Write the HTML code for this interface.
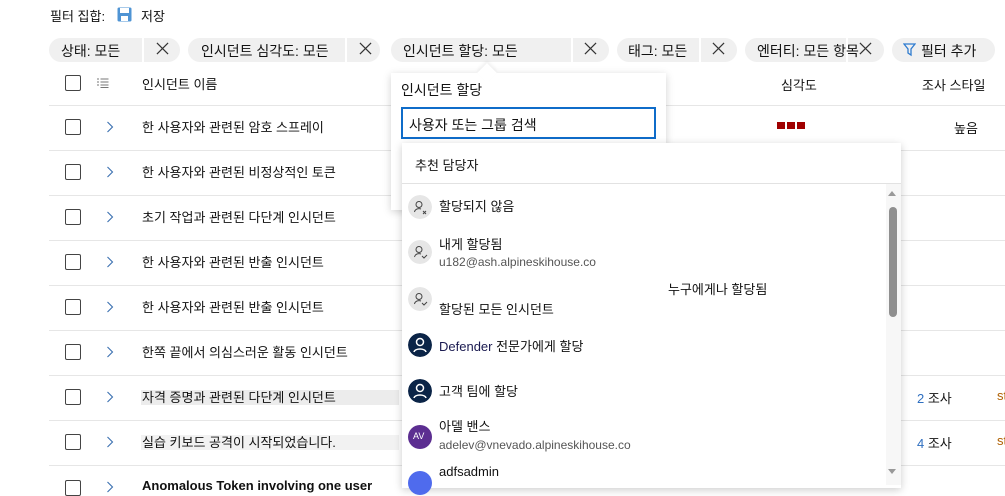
<!DOCTYPE html>
<html><head><meta charset="utf-8"><style>
*{margin:0;padding:0;box-sizing:border-box}
body{width:1005px;height:485px;overflow:hidden;background:#fff;font-family:"Liberation Sans","Noto Sans CJK KR",sans-serif;font-size:13px;color:#111;position:relative}
.a{position:absolute;white-space:nowrap}
.pill{position:absolute;top:38px;height:24px;background:#f0f0f0;border-radius:12px}
.sep{position:absolute;top:38px;width:2px;height:24px;background:#fff}
.x{position:absolute;top:42px}
.cb{position:absolute;left:65px;width:16px;height:16px;border:1px solid #444;border-radius:2px}
.chev{position:absolute;left:106px}
.line{position:absolute;left:49px;right:0;height:1px;background:#e6e6e6}
.av{position:absolute;left:408px;width:24px;height:24px;border-radius:50%}
</style></head><body>
<svg width="0" height="0" style="position:absolute"><defs>
<symbol id="xx" viewBox="0 0 14 14"><path d="M1 1L13 13M13 1L1 13" stroke="#333" stroke-width="1.3"/></symbol>
<symbol id="ch" viewBox="0 0 8 12"><path d="M1.5 1l5 5-5 5" fill="none" stroke="#3a6fb0" stroke-width="1.1"/></symbol>
<symbol id="pu" viewBox="0 0 24 24"><circle cx="12" cy="12" r="12" fill="#e6e6e6"/><circle cx="11" cy="9.5" r="3" fill="none" stroke="#444" stroke-width="1"/><path d="M6.5 17c.5-3 4-4 6.5-3" fill="none" stroke="#444" stroke-width="1"/></symbol>
</defs></svg>
<div class="a" style="left:50px;top:6px">필터 집합:</div>
<svg class="a" style="left:117px;top:7px" width="15" height="15" viewBox="0 0 15 15"><rect x="0.5" y="0.5" width="14" height="14" rx="1.5" fill="#4f94d4"/><rect x="3" y="1" width="9" height="5" fill="#fff"/><rect x="4" y="9" width="7" height="5" fill="#fff"/></svg>
<div class="a" style="left:141px;top:6px">저장</div>

<div class="pill" style="left:49px;width:131px"></div><div class="sep" style="left:142px"></div>
<div class="a" style="left:61px;top:41px;font-size:14px">상태: 모든</div><svg class="x" style="left:156px" width="13" height="13"><use href="#xx"/></svg>
<div class="pill" style="left:188px;width:192px"></div><div class="sep" style="left:345px"></div>
<div class="a" style="left:201px;top:41px;font-size:14px">인시던트 심각도: 모든</div><svg class="x" style="left:359px" width="13" height="13"><use href="#xx"/></svg>
<div class="pill" style="left:391px;width:218px"></div><div class="sep" style="left:571px"></div>
<div class="a" style="left:403px;top:41px;font-size:14px">인시던트 할당: 모든</div><svg class="x" style="left:584px" width="13" height="13"><use href="#xx"/></svg>
<div class="pill" style="left:617px;width:120px"></div><div class="sep" style="left:699px"></div>
<div class="a" style="left:628px;top:41px;font-size:14px">태그: 모든</div><svg class="x" style="left:712px" width="13" height="13"><use href="#xx"/></svg>
<div class="pill" style="left:745px;width:139px"></div><div class="sep" style="left:846px"></div>
<div class="a" style="left:757px;top:41px;font-size:14px">엔터티: 모든 항목</div><svg class="x" style="left:859px" width="13" height="13"><use href="#xx"/></svg>
<div class="pill" style="left:892px;width:103px"></div>
<svg class="a" style="left:903px;top:43px" width="13" height="14" viewBox="0 0 13 14"><path d="M1 1h11L8 6v6L5 10V6z" fill="none" stroke="#2e7bcf" stroke-width="1.3"/></svg>
<div class="a" style="left:921px;top:41px;font-size:14px">필터 추가</div>

<div class="cb" style="top:75px"></div>
<svg class="a" style="left:97px;top:78px" width="12" height="10" viewBox="0 0 12 10"><path d="M0 1h2M0 4h2M0 7h2M3.5 1h8M3.5 4h8M3.5 7h8M3.5 9.5h8" stroke="#777" stroke-width="1"/></svg>
<div class="a" style="left:142px;top:74px">인시던트 이름</div>
<div class="a" style="left:781px;top:75px">심각도</div>
<div class="a" style="left:922px;top:75px">조사 스타일</div>

<div class="line" style="top:105px"></div><div class="line" style="top:150px"></div><div class="line" style="top:195px"></div><div class="line" style="top:240px"></div><div class="line" style="top:285px"></div><div class="line" style="top:330px"></div><div class="line" style="top:375px"></div><div class="line" style="top:420px"></div><div class="line" style="top:465px"></div>

<div class="cb" style="top:119px"></div><svg class="chev" style="top:121px" width="8" height="12"><use href="#ch"/></svg><div class="a" style="left:142px;top:117px">한 사용자와 관련된 암호 스프레이</div>
<div class="cb" style="top:164px"></div><svg class="chev" style="top:166px" width="8" height="12"><use href="#ch"/></svg><div class="a" style="left:142px;top:162px">한 사용자와 관련된 비정상적인 토큰</div>
<div class="cb" style="top:209px"></div><svg class="chev" style="top:211px" width="8" height="12"><use href="#ch"/></svg><div class="a" style="left:142px;top:207px">초기 작업과 관련된 다단계 인시던트</div>
<div class="cb" style="top:254px"></div><svg class="chev" style="top:256px" width="8" height="12"><use href="#ch"/></svg><div class="a" style="left:142px;top:252px">한 사용자와 관련된 반출 인시던트</div>
<div class="cb" style="top:299px"></div><svg class="chev" style="top:301px" width="8" height="12"><use href="#ch"/></svg><div class="a" style="left:142px;top:297px">한 사용자와 관련된 반출 인시던트</div>
<div class="cb" style="top:344px"></div><svg class="chev" style="top:346px" width="8" height="12"><use href="#ch"/></svg><div class="a" style="left:142px;top:342px">한쪽 끝에서 의심스러운 활동 인시던트</div>
<div class="a" style="left:141px;top:390px;width:258px;height:15px;background:#ececec"></div>
<div class="cb" style="top:389px"></div><svg class="chev" style="top:391px" width="8" height="12"><use href="#ch"/></svg><div class="a" style="left:142px;top:387px">자격 증명과 관련된 다단계 인시던트</div>
<div class="a" style="left:141px;top:435px;width:258px;height:15px;background:#f2f2f2"></div>
<div class="cb" style="top:434px"></div><svg class="chev" style="top:436px" width="8" height="12"><use href="#ch"/></svg><div class="a" style="left:142px;top:432px">실습 키보드 공격이 시작되었습니다.</div>
<div class="cb" style="top:480px"></div><svg class="chev" style="top:481px" width="8" height="12"><use href="#ch"/></svg><div class="a" style="left:142px;top:478px;font-weight:bold">Anomalous Token involving one user</div>

<div class="a" style="left:777px;top:122px;width:28px;height:7px;background:repeating-linear-gradient(90deg,#a00000 0 8px,#fff 8px 10px)"></div>
<div class="a" style="left:954px;top:118px">높음</div>
<div class="a" style="left:917px;top:388px"><span style="color:#2e6fc0">2</span> 조사</div>
<div class="a" style="left:917px;top:433px"><span style="color:#2e6fc0">4</span> 조사</div>
<div class="a" style="left:997px;top:388px;color:#b06000">st</div>
<div class="a" style="left:997px;top:433px;color:#b06000">st</div>

<div class="a" style="left:391px;top:73px;width:275px;height:137px;background:#fff;box-shadow:0 2px 8px rgba(0,0,0,.18)"></div>
<div class="a" style="left:480px;top:66px;width:14px;height:14px;background:#fff;transform:rotate(45deg);box-shadow:-2px -2px 3px rgba(0,0,0,.06)"></div>
<div class="a" style="left:401px;top:80px;font-size:14px">인시던트 할당</div>
<div class="a" style="left:401px;top:107px;width:255px;height:32px;border:2px solid #0f6cc9"></div>
<div class="a" style="left:409px;top:115px;font-size:14px">사용자 또는 그룹 검색</div>

<div class="a" style="left:402px;top:143px;width:499px;height:345px;background:#fff;box-shadow:0 2px 8px rgba(0,0,0,.2)"></div>
<div class="a" style="left:415px;top:155px">추천 담당자</div>
<div class="a" style="left:402px;top:183px;width:499px;height:1px;background:#e2e2e2"></div>
<div class="a" style="left:886px;top:184px;width:15px;height:301px;background:#f7f7f7"></div>
<div class="a" style="left:888px;top:191px;width:0;height:0;border:4px solid transparent;border-bottom:5px solid #999;border-top:0"></div>
<div class="a" style="left:889px;top:207px;width:8px;height:110px;background:#8f8f8f;border-radius:4px"></div>
<div class="a" style="left:888px;top:469px;width:0;height:0;border:4px solid transparent;border-top:5px solid #999;border-bottom:0"></div>

<svg class="av" style="top:195px" width="24" height="24"><use href="#pu"/><path d="M15 16l3 3M18 16l-3 3" stroke="#444" stroke-width="1"/></svg>
<div class="a" style="left:439px;top:196px">할당되지 않음</div>
<svg class="av" style="top:240px" width="24" height="24"><use href="#pu"/><path d="M14 16l2 2 3-3" fill="none" stroke="#444" stroke-width="1"/></svg>
<div class="a" style="left:439px;top:234px">내게 할당됨</div>
<div class="a" style="left:439px;top:255px;font-size:12px;color:#555">u182@ash.alpineskihouse.co</div>
<svg class="av" style="top:287px" width="24" height="24"><use href="#pu"/><path d="M14 16l2 2 3-3" fill="none" stroke="#444" stroke-width="1"/></svg>
<div class="a" style="left:439px;top:299px">할당된 모든 인시던트</div>
<div class="a" style="left:668px;top:279px">누구에게나 할당됨</div>
<svg class="av" style="top:333px" width="24" height="24" viewBox="0 0 24 24"><circle cx="12" cy="12" r="12" fill="#0b2447"/><circle cx="12" cy="9" r="3.5" fill="none" stroke="#fff" stroke-width="1.5"/><path d="M6 19c1-4 11-4 12 0" fill="none" stroke="#fff" stroke-width="1.5"/></svg>
<div class="a" style="left:439px;top:336px"><span style="color:#1a1a50">Defender</span> 전문가에게 할당</div>
<svg class="av" style="top:379px" width="24" height="24" viewBox="0 0 24 24"><circle cx="12" cy="12" r="12" fill="#0b2447"/><circle cx="12" cy="9" r="3.5" fill="none" stroke="#fff" stroke-width="1.5"/><path d="M6 19c1-4 11-4 12 0" fill="none" stroke="#fff" stroke-width="1.5"/></svg>
<div class="a" style="left:439px;top:381px">고객 팀에 할당</div>
<div class="av" style="top:425px;background:#5c2e91"></div><div class="a" style="left:413px;top:431px;color:#fff;font-size:9px">AV</div>
<div class="a" style="left:439px;top:416px">아델 밴스</div>
<div class="a" style="left:439px;top:438px;font-size:12px;color:#555">adelev@vnevado.alpineskihouse.co</div>
<div class="av" style="top:471px;background:#4f6bed"></div>
<div class="a" style="left:439px;top:464px">adfsadmin</div>
</body></html>
